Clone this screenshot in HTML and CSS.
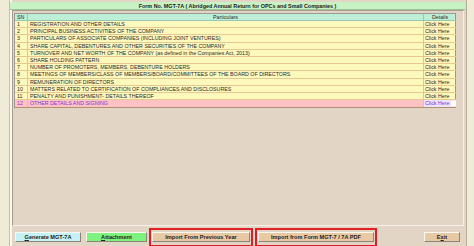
FILE: index.html
```html
<!DOCTYPE html>
<html lang="en">
<head>
    <meta charset="UTF-8">
    <title>Form No. MGT-7A</title>
    <link rel="stylesheet" href="styles.css">
</head>
<body>
    <div class="frame">
        <div class="title">Form No. MGT-7A ( Abridged Annual Return for OPCs and Small Companies )</div>
        <div class="panel">
            <div class="grid">
                <div class="row head">
                    <div class="sn">SN</div>
                    <div class="part">Particulars</div>
                    <div class="det">Details</div>
                </div>
                <div class="row"><div class="sn">1</div><div class="part">REGISTRATION AND OTHER DETAILS</div><div class="det">Click Here</div></div>
                <div class="row"><div class="sn">2</div><div class="part">PRINCIPAL BUSINESS ACTIVITIES OF THE COMPANY</div><div class="det">Click Here</div></div>
                <div class="row"><div class="sn">3</div><div class="part">PARTICULARS OF ASSOCIATE COMPANIES (INCLUDING JOINT VENTURES)</div><div class="det">Click Here</div></div>
                <div class="row"><div class="sn">4</div><div class="part">SHARE CAPITAL, DEBENTURES AND OTHER SECURITIES OF THE COMPANY</div><div class="det">Click Here</div></div>
                <div class="row"><div class="sn">5</div><div class="part">TURNOVER AND NET WORTH OF THE COMPANY (as defined in the Companies Act, 2013)</div><div class="det">Click Here</div></div>
                <div class="row"><div class="sn">6</div><div class="part">SHARE HOLDING PATTERN</div><div class="det">Click Here</div></div>
                <div class="row"><div class="sn">7</div><div class="part">NUMBER OF PROMOTERS, MEMBERS, DEBENTURE HOLDERS</div><div class="det">Click Here</div></div>
                <div class="row"><div class="sn">8</div><div class="part">MEETINGS OF MEMBERS/CLASS OF MEMBERS/BOARD/COMMITTEES OF THE BOARD OF DIRECTORS</div><div class="det">Click Here</div></div>
                <div class="row"><div class="sn">9</div><div class="part">REMUNERATION OF DIRECTORS</div><div class="det">Click Here</div></div>
                <div class="row"><div class="sn">10</div><div class="part">MATTERS RELATED TO CERTIFICATION OF COMPLIANCES AND DISCLOSURES</div><div class="det">Click Here</div></div>
                <div class="row"><div class="sn">11</div><div class="part">PENALTY AND PUNISHMENT- DETAILS THEREOF</div><div class="det">Click Here</div></div>
                <div class="row sel"><div class="sn">12</div><div class="part">OTHER DETAILS AND SIGNING</div><div class="det"><span>Click Here</span><i></i></div></div>
            </div>
        </div>
        <div class="buttons">
            <div class="btn gen"><u>G</u>enerate MGT-7A</div>
            <div class="btn att"><u>A</u>ttachment</div>
            <div class="mark">
                <div class="btn imp w1">Import From Previous Year</div>
            </div>
            <div class="mark">
                <div class="btn imp w2">Import from Form MGT-7 / 7A PDF</div>
            </div>
            <div class="btn imp exit">E<u>x</u>it</div>
        </div>
    </div>
</body>
</html>
```
FILE: styles.css
```css
*{
    margin: 0;
    padding: 0;
    box-sizing: border-box;
}
body{
    width: 474px;
    height: 246px;
    overflow: hidden;
    background: #f0ebd6;
    font-family: "Liberation Sans", Arial, sans-serif;
    color: #2a2a2a;
}
.frame{
    margin: 0 7px 0 10px;
    padding-top: 2px;
    height: 246px;
    background: #e2d5c5;
    border-left: 2px solid #faf8ee;
    border-right: 1px solid #b8ad98;
    box-shadow: -1px 0 0 #c8c0a8;
}
.title{
    height: 8px;
    margin: 0 1px 0 -2px;
    background: #c8f2c4;
    border-bottom: 1px solid #9cc49a;
    font-size: 5.4px;
    font-weight: bold;
    line-height: 8px;
    text-align: center;
    color: #1a1a1a;
}
.panel{
    height: 216px;
    margin: 0 2px 0 0;
    padding: 2px 6px 0 1px;
    border-left: 1px solid #a89c8c;
    border-top: 1px solid #a89c8c;
    border-right: 1px solid #f6f0e6;
    border-bottom: 1px solid #f6f0e6;
}
.grid{
    width: 442px;
    border: 1px solid #b09070;
    border-left-color: #9a9a9a;
    border-top-color: #9a9a9a;
}
.row{
    display: grid;
    grid-template-columns: 13px 396px 32px;
    height: 7.2px;
    font-size: 5.3px;
    line-height: 6.2px;
    background: #fdf8bc;
}
.row > div{
    border-right: 1px solid #e4c488;
    border-bottom: 1px solid #e8c890;
    padding-left: 2px;
    white-space: nowrap;
    overflow: hidden;
}
.row > .det{
    border-right: none;
    padding-left: 1px;
}
.head{
    height: 7px;
    background: #bdeed6;
}
.head > div{
    border-color: #98c8b4;
}
.head .part,
.head .det{
    text-align: center;
    padding-left: 0;
}
.sel{
    background: #ffc2c4;
    color: #7a3ad6;
}
.sel > div{
    border-bottom: none;
}
.sel .det{
    display: flex;
    background: #ebe4fa;
}
.sel .det i{
    width: 5px;
    margin: 1px 0 1px auto;
    background: #fff;
}
.buttons{
    display: flex;
    align-items: center;
    height: 20px;
    padding: 1px 0 0 3px;
}
.btn{
    height: 10px;
    font-size: 5.6px;
    font-weight: bold;
    line-height: 8px;
    text-align: center;
    color: #222;
    border: 1px solid;
    border-color: #fbf8f0 #8c8478 #8c8478 #fbf8f0;
}
.gen{
    width: 66px;
    background: #c4f2f6;
}
.att{
    width: 61px;
    margin-left: 5px;
    background: #7ef27e;
}
.imp{
    background: #e8c9a4;
}
.mark{
    border: 2px solid #e01e26;
    padding: 2px 1px;
    height: 19px;
    margin: 1px 0 0 2px;
}
.w1{
    width: 98px;
}
.w2{
    width: 116px;
}
.exit{
    width: 36px;
    margin-left: 47px;
}
```
